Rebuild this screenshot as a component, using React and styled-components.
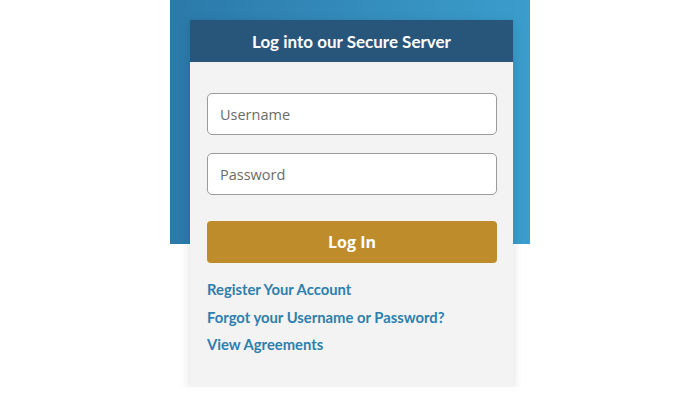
import React from 'react'
import styled, { createGlobalStyle } from 'styled-components'

const GlobalStyle = createGlobalStyle`
  body {
    margin: 0;
    background: #ffffff;
    font-family: 'Lato', 'Open Sans', sans-serif;
  }
`

const Stage = styled.div`
  width: 360px;
  margin: 0 auto;
  padding-top: 20px;
  background: linear-gradient(to right, #2b79a9, #3b9dcc) no-repeat;
  background-size: 100% 244px;
`

const Card = styled.div`
  width: 323px;
  margin-left: 20px;
  background: #f3f3f3;
  box-shadow: 0 3px 10px rgba(0, 0, 0, 0.14);
`

const Header = styled.div`
  height: 42px;
  display: flex;
  align-items: center;
  justify-content: center;
  background: #28557a;
  color: #ffffff;
  font-weight: 700;
  font-size: 17px;
`

const Body = styled.div`
  padding: 31px 16px 33px 17px;
  display: flex;
  flex-direction: column;
`

const Field = styled.input`
  box-sizing: border-box;
  height: 42px;
  width: 100%;
  margin-bottom: ${p => p.$last ? '26px' : '18px'};
  padding: 0 12px;
  border: 1px solid #9a9a9a;
  border-radius: 5px;
  background: #ffffff;
  font-family: 'Open Sans', sans-serif;
  font-size: 14.5px;
  color: #333;
  outline: none;
  &::placeholder {
    color: #6b6b6b;
  }
`

const Button = styled.button`
  height: 42px;
  width: 100%;
  border: none;
  border-radius: 4px;
  background: #bf8c2b;
  color: #ffffff;
  font-family: 'Open Sans', sans-serif;
  font-weight: 700;
  font-size: 16px;
  cursor: pointer;
  margin-bottom: 17px;
`

const Links = styled.div`
  display: flex;
  flex-direction: column;
  gap: 8.5px;
`

const Link = styled.a`
  color: #2d7fad;
  font-weight: 700;
  font-size: 14.8px;
  line-height: 19px;
  text-decoration: none;
  cursor: pointer;
`

export default function App() {
  return (
    <>
      <GlobalStyle />
      <Stage>
        <Card>
          <Header>Log into our Secure Server</Header>
          <Body>
            <Field type="text" placeholder="Username" />
            <Field type="password" placeholder="Password" $last />
            <Button>Log In</Button>
            <Links>
              <Link>Register Your Account</Link>
              <Link>Forgot your Username or Password?</Link>
              <Link>View Agreements</Link>
            </Links>
          </Body>
        </Card>
      </Stage>
    </>
  )
}
